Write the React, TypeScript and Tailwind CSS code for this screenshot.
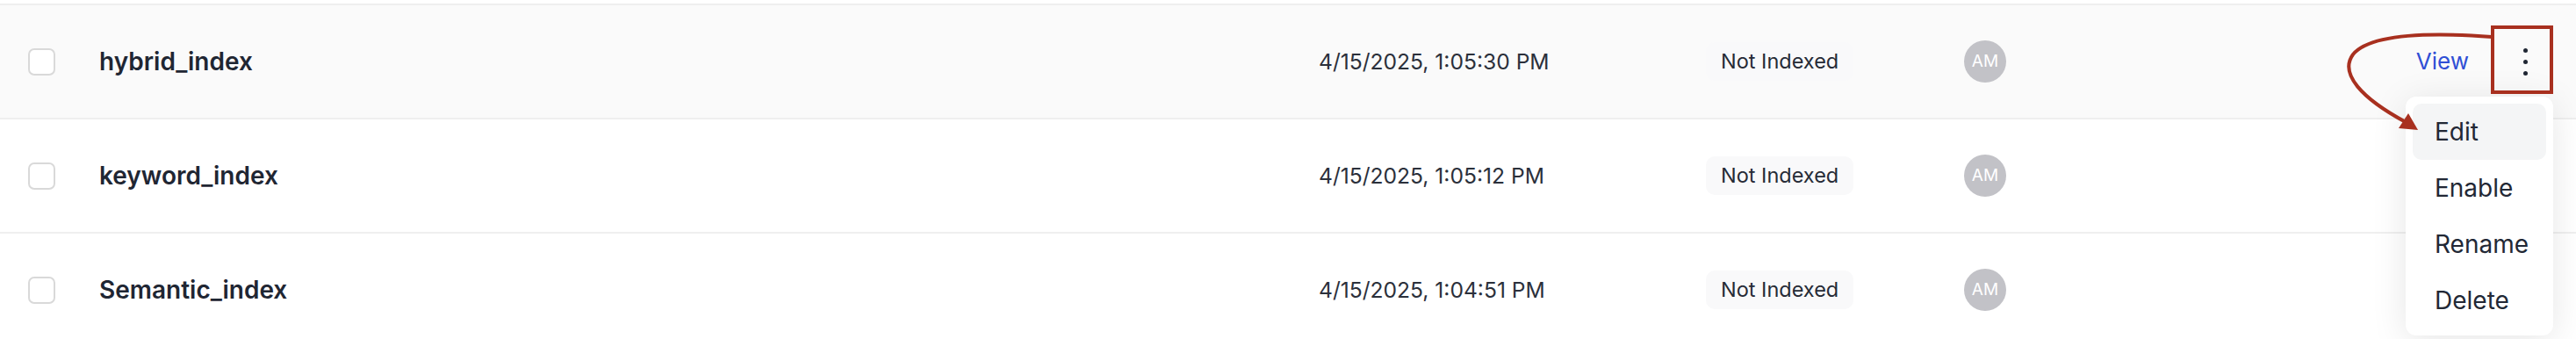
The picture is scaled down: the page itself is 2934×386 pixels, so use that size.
import React from "react";

const rows = [
  { name: "hybrid_index", date: "4/15/2025, 1:05:30 PM", hover: true },
  { name: "keyword_index", date: "4/15/2025, 1:05:12 PM", hover: false },
  { name: "Semantic_index", date: "4/15/2025, 1:04:51 PM", hover: false },
];

function Row({ name, date, hover, first }: { name: string; date: string; hover: boolean; first: boolean }) {
  return (
    <div
      className={`flex items-center h-[130px] border-b-2 border-[#efefef] ${hover ? "bg-[#fafafa]" : "bg-white"}`}
    >
      <div className="w-[113px] pl-[32px] flex items-center">
        <div className="w-[31px] h-[31px] rounded-[7px] border-2 border-[#d9d9d9] bg-white" />
      </div>
      <div className="w-[1389px] text-[28px] font-semibold text-[#1f2633] leading-none">{name}</div>
      <div className="w-[441px] text-[24.6px] text-[#2b303b] leading-none">{date}</div>
      <div className="w-[294px] flex items-center">
        <div className="h-[44px] px-[17px] rounded-[10px] bg-[#f9f9fa] flex items-center text-[23.5px] text-[#262b36]">
          Not Indexed
        </div>
      </div>
      <div className="flex-1 flex items-center">
        <div className="w-[48px] h-[48px] rounded-full bg-[#c2c2c7] flex items-center justify-center text-white text-[19px]">
          AM
        </div>
      </div>
      <div className="flex items-center pr-[26px]">
        {first ? (
          <>
            <span className="text-[26px] text-[#2f4fd5] leading-none">View</span>
            <div className="ml-[32px] w-[64px] h-[64px] flex flex-col items-center justify-center gap-[8px]">
              <span className="w-[5px] h-[5px] rounded-full bg-[#1f2633]" />
              <span className="w-[5px] h-[5px] rounded-full bg-[#1f2633]" />
              <span className="w-[5px] h-[5px] rounded-full bg-[#1f2633]" />
            </div>
          </>
        ) : (
          <div className="w-[64px] h-[64px]" />
        )}
      </div>
    </div>
  );
}

export default function App() {
  return (
    <div
      className="relative w-[2934px] h-[386px] overflow-hidden bg-white pt-[4px]"
      style={{ fontFamily: "Inter, 'Noto Sans', sans-serif" }}
    >
      <div className="border-t-2 border-[#efefef]">
        {rows.map((r, i) => (
          <Row key={r.name} name={r.name} date={r.date} hover={r.hover} first={i === 0} />
        ))}
      </div>

      {/* dropdown menu */}
      <div className="absolute left-[2740px] top-[110px] w-[168px] h-[272px] bg-white rounded-[12px] p-[8px] shadow-[0_6px_40px_rgba(0,0,0,0.10)] text-[28px] text-[#222835]">
        <div className="h-[64px] rounded-[10px] bg-[#f4f5f6] flex items-center pl-[25px]">Edit</div>
        <div className="h-[64px] flex items-center pl-[25px]">Enable</div>
        <div className="h-[64px] flex items-center pl-[25px]">Rename</div>
        <div className="h-[64px] flex items-center pl-[25px]">Delete</div>
      </div>

      {/* annotation box */}
      <div className="absolute left-[2837px] top-[29px] w-[71px] h-[78px] border-4 border-[#a8301f]" />

      {/* annotation arrow */}
      <svg className="absolute left-0 top-0 pointer-events-none" width="2934" height="386" viewBox="0 0 2934 386">
        <path
          d="M2838 42 C2770 37, 2700 38, 2680 62 C2664 84, 2690 112, 2740 139"
          fill="none"
          stroke="#a8301f"
          strokeWidth="4"
          strokeLinecap="round"
        />
        <polygon points="2754,148 2732,146 2743,129" fill="#a8301f" />
      </svg>
    </div>
  );
}
